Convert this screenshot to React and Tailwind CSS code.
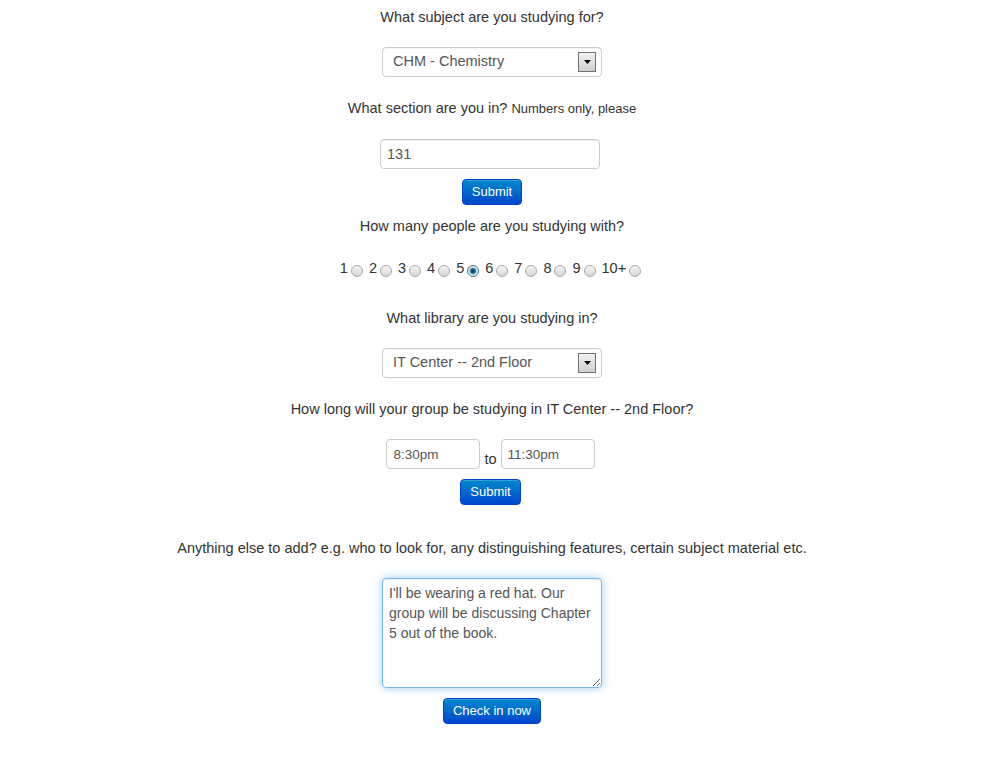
import { useState } from "react";

const people = ["1", "2", "3", "4", "5", "6", "7", "8", "9", "10+"];

const Label = ({ children, className = "" }) => (
  <p className={`text-[14.5px] leading-[20px] text-[#333] ${className}`}>{children}</p>
);

const FakeSelect = ({ value }) => (
  <div className="flex h-[30px] w-[220px] items-center justify-between rounded-[4px] border border-[#ccc] bg-white pl-[10px] pr-[5px] text-[14.5px] text-[#555] shadow-[inset_0_1px_1px_rgba(0,0,0,0.05)]">
    <span>{value}</span>
    <span className="flex h-[20px] w-[18px] items-center justify-center border border-[#707070] bg-gradient-to-b from-[#f2f2f2] to-[#cfcfcf]">
      <svg width="7" height="4" viewBox="0 0 7 4">
        <path d="M0 0h7L3.5 4z" fill="#000" />
      </svg>
    </span>
  </div>
);

const BlueButton = ({ children, className = "" }) => (
  <button className={`h-[26px] rounded-[4px] border border-[#0044cc] bg-gradient-to-b from-[#0088cc] to-[#0044cc] px-[9px] text-[13px] leading-[24px] text-white shadow-[inset_0_1px_0_rgba(255,255,255,0.2)] ${className}`}>
    {children}
  </button>
);

const Radio = ({ checked }) => (
  <span
    className={`inline-block h-[12px] w-[12px] translate-y-[4px] rounded-full border ${
      checked
        ? "border-[#5c6f80] bg-[radial-gradient(circle,#0a3a5a_0,#1c5f8a_2px,#5fa3cf_3px,#e8eef3_4px,#d8dde2_6px)]"
        : "border-[#a9a9a9] bg-gradient-to-b from-[#f4f4f4] to-[#d5d5d5]"
    }`}
  />
);

export default function App() {
  const [count, setCount] = useState("5");

  return (
    <div className="flex min-h-[767px] flex-col items-center bg-white pr-[4px] font-['Liberation_Sans',Arial,sans-serif] text-[#333]">
      <Label className="mt-[7px]">What subject are you studying for?</Label>
      <div className="mt-[20px]">
        <FakeSelect value="CHM - Chemistry" />
      </div>

      <Label className="mt-[21px]">
        What section are you in? <span className="text-[13px]">Numbers only, please</span>
      </Label>
      <input
        defaultValue="131"
        className="ml-[-4px] mt-[20px] h-[30px] w-[220px] rounded-[4px] border border-[#ccc] px-[6px] text-[14.5px] text-[#555] shadow-[inset_0_1px_1px_rgba(0,0,0,0.075)] outline-none"
      />
      <BlueButton className="mt-[10px]">Submit</BlueButton>

      <Label className="mt-[11px]">How many people are you studying with?</Label>
      <div className="ml-[3px] mt-[22px] flex items-center text-[14.5px] leading-[20px]">
        {people.map((n) => (
          <label key={n} className="flex items-center" onClick={() => setCount(n)}>
            <span>{n}</span>
            <span className="ml-[3px] mr-[6px]">
              <Radio checked={count === n} />
            </span>
          </label>
        ))}
      </div>

      <Label className="mt-[30px]">What library are you studying in?</Label>
      <div className="mt-[20px]">
        <FakeSelect value="IT Center -- 2nd Floor" />
      </div>

      <Label className="mt-[21px]">How long will your group be studying in IT Center -- 2nd Floor?</Label>
      <div className="ml-[-3px] mt-[20px] flex items-end">
        <input
          defaultValue="8:30pm"
          className="h-[30px] w-[94px] rounded-[4px] border border-[#ccc] px-[6px] text-[13.5px] text-[#555] outline-none"
        />
        <span className="mx-[4px] text-[14.5px] leading-[20px]">to</span>
        <input
          defaultValue="11:30pm"
          className="h-[30px] w-[94px] rounded-[4px] border border-[#ccc] px-[6px] text-[13.5px] text-[#555] outline-none"
        />
      </div>
      <BlueButton className="ml-[-3px] mt-[10px]">Submit</BlueButton>

      <Label className="mt-[33px]">
        Anything else to add? e.g. who to look for, any distinguishing features, certain subject material etc.
      </Label>
      <textarea
        defaultValue="I'll be wearing a red hat. Our group will be discussing Chapter 5 out of the book."
        className="mt-[20px] h-[110px] w-[220px] resize-y rounded-[4px] border border-[rgba(82,168,236,0.8)] pl-[6px] pr-[2px] py-[4px] text-[14px] leading-[20px] text-[#555] shadow-[inset_0_1px_1px_rgba(0,0,0,0.075),0_0_8px_rgba(82,168,236,0.6)] outline-none"
      />
      <BlueButton className="mt-[10px]">Check in now</BlueButton>
    </div>
  );
}
